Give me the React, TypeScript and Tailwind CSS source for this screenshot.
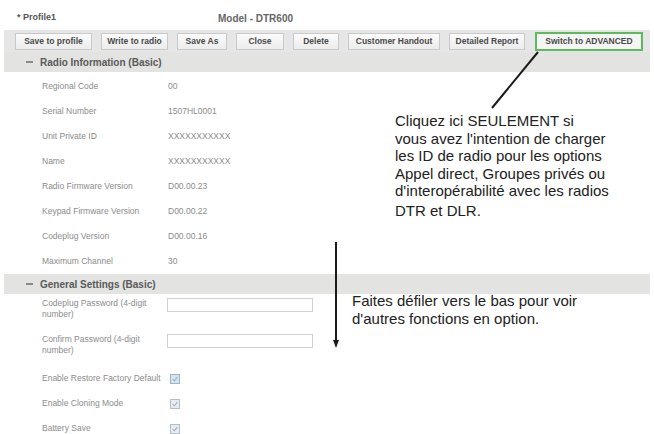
const buttons: { label: string; w: string }[] = [
  { label: 'Save to profile', w: 'w-[77px]' },
  { label: 'Write to radio', w: 'w-[67px]' },
  { label: 'Save As', w: 'w-[50px]' },
  { label: 'Close', w: 'w-[48px]' },
  { label: 'Delete', w: 'w-[46px]' },
  { label: 'Customer Handout', w: 'w-[92px]' },
  { label: 'Detailed Report', w: 'w-[76px]' },
]

const radioInfo: [string, string][] = [
  ['Regional Code', '00'],
  ['Serial Number', '1507HL0001'],
  ['Unit Private ID', 'XXXXXXXXXXX'],
  ['Name', 'XXXXXXXXXXX'],
  ['Radio Firmware Version', 'D00.00.23'],
  ['Keypad Firmware Version', 'D00.00.22'],
  ['Codeplug Version', 'D00.00.16'],
  ['Maximum Channel', '30'],
]

function SectionHeader({ title }: { title: string }) {
  return (
    <div className="flex h-[20px] items-center bg-[#e3e3e1] pl-[21px]">
      <span className="flex h-[9px] w-[9px] items-center justify-center">
        <span className="h-[2px] w-[7px] bg-[#8a8a8a]" />
      </span>
      <span className="ml-[6px] text-[10px] font-bold text-[#5a5a5a]">{title}</span>
    </div>
  )
}

function Checkbox({ tint }: { tint?: boolean }) {
  return (
    <span
      className={`flex h-[10px] w-[10px] items-center justify-center border ${
        tint ? 'border-[#9fb6c8] bg-[#d5e3ee]' : 'border-[#b3bec8] bg-[#e6ecf1]'
      }`}
    >
      <svg viewBox="0 0 10 10" className="h-[8px] w-[8px]">
        <path d="M2 5.2 L4.2 7.2 L8 2.6" fill="none" stroke="#9fb0be" strokeWidth="1.3" />
      </svg>
    </span>
  )
}

export default function App() {
  return (
    <div className="relative h-[434px] w-[654px] overflow-hidden bg-white font-['Liberation_Sans',Arial,sans-serif]">
      {/* title line */}
      <div className="flex h-[30px] items-center pt-[6px] text-[#555]">
        <span className="w-[218px] pl-[17px] text-[9px] font-bold">* Profile1</span>
        <span className="text-[10px] font-bold text-[#666]">Model - DTR600</span>
      </div>

      <div className="mx-[4px]">
        {/* toolbar */}
        <div className="flex h-[22px] items-center gap-[9px] bg-[#e6e6e6] pl-[11px]">
          {buttons.map((b) => (
            <button
              key={b.label}
              className={`${b.w} h-[17px] border border-[#c9c9c9] bg-gradient-to-b from-[#fbfbfb] to-[#ececec] text-[8.5px] font-bold text-[#4a4a4a]`}
            >
              {b.label}
            </button>
          ))}
          <button className="ml-[1px] h-[19px] w-[108px] border-2 border-[#5cbc5c] bg-[#f5f5f5] text-[8.5px] font-bold text-[#4a4a4a]">
            Switch to ADVANCED
          </button>
        </div>

        <SectionHeader title="Radio Information (Basic)" />
        <div className="pt-[2px]">
          {radioInfo.map(([label, value]) => (
            <div key={label} className="flex h-[25px] items-center text-[8.5px] text-[#8c8c8c]">
              <span className="w-[164px] pl-[38px]">{label}</span>
              <span>{value}</span>
            </div>
          ))}
        </div>

        <SectionHeader title="General Settings (Basic)" />
        <div className="text-[8.5px] text-[#8c8c8c]">
          {['Codeplug Password (4-digit number)', 'Confirm Password (4-digit number)'].map((label) => (
            <div key={label} className="flex h-[36px] items-start pt-[4px]">
              <span className="w-[163px] pl-[38px] pr-[8px] leading-[11px]">{label}</span>
              <span className="h-[14px] w-[146px] border border-[#d2d2d2] bg-white" />
            </div>
          ))}
          {['Enable Restore Factory Default', 'Enable Cloning Mode', 'Battery Save'].map((label, i) => (
            <div key={label} className="flex h-[25px] items-center">
              <span className="w-[166px] pl-[38px]">{label}</span>
              <Checkbox tint={i === 0} />
            </div>
          ))}
        </div>
      </div>

      {/* callouts */}
      <svg className="pointer-events-none absolute inset-0" width="654" height="434">
        <line x1="538" y1="52" x2="492" y2="108" stroke="#1a1a1a" strokeWidth="2" />
        <line x1="336" y1="242" x2="336" y2="342" stroke="#1a1a1a" strokeWidth="2" />
        <path d="M333 340 L339 340 L336 348 Z" fill="#1a1a1a" />
      </svg>
      <p className="absolute left-[395px] top-[112px] whitespace-nowrap text-[15px] leading-[17.6px] text-[#222]">
        Cliquez ici SEULEMENT si
        <br />
        vous avez l'intention de charger
        <br />
        les ID de radio pour les options
        <br />
        Appel direct, Groupes privés ou
        <br />
        d'interopérabilité avec les radios
        <br />
        <span className="mt-[2px] inline-block">DTR et DLR.</span>
      </p>
      <p className="absolute left-[352px] top-[292px] whitespace-nowrap text-[15px] leading-[18px] text-[#222]">
        Faites défiler vers le bas pour voir
        <br />
        d'autres fonctions en option.
      </p>
    </div>
  )
}
